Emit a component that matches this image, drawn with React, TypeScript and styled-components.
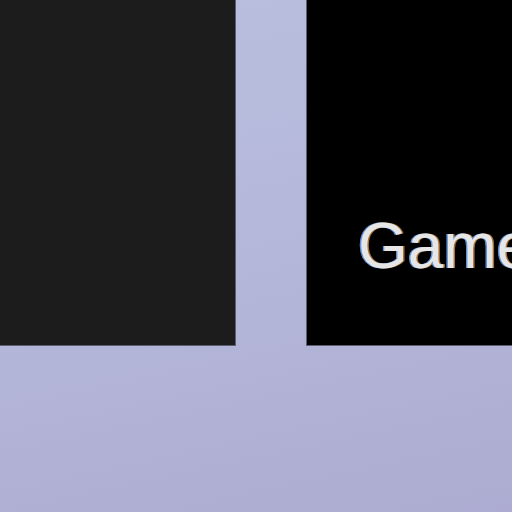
import styled, { createGlobalStyle } from "styled-components";

const GlobalStyle = createGlobalStyle`
  html, body {
    margin: 0;
    height: 100%;
  }
  body {
    background: linear-gradient(168deg, #babfde 0%, #b3b6d9 55%, #adabd1 100%);
    background-attachment: fixed;
    font-family: "Liberation Sans", Arial, sans-serif;
    overflow: hidden;
  }
`;

const Page = styled.div`
  width: 512px;
  height: 512px;
  display: flex;
  flex-direction: column;
`;

const TileRow = styled.div`
  display: flex;
  gap: 70px;
  height: 346px;
`;

const Tile = styled.div<{ $shade: string; $side: "left" | "right" }>`
  background: ${({ $shade }) => $shade};
  border: 1px solid #5c5d70;
  border-top: none;
  ${({ $side }) => ($side === "left" ? "border-left: none;" : "border-right: none;")}
  box-sizing: border-box;
  overflow: hidden;
`;

const ThumbTile = styled(Tile)`
  width: 236px;
  flex: none;
`;

const TitleTile = styled(Tile)`
  flex: 1;
  padding: 214px 0 0 51px;
`;

const Title = styled.span`
  display: block;
  font-size: 64px;
  line-height: 1;
  color: #e6e6e6;
  white-space: nowrap;
  filter: blur(0.7px);
  text-shadow: -1.5px 0 rgba(110, 170, 255, 0.85), 1.5px 0 rgba(225, 150, 70, 0.75);
`;

export default function App() {
  return (
    <>
      <GlobalStyle />
      <Page>
        <TileRow>
          <ThumbTile $shade="#1c1c1c" $side="left" />
          <TitleTile $shade="#000000" $side="right">
            <Title>Games</Title>
          </TitleTile>
        </TileRow>
      </Page>
    </>
  );
}
